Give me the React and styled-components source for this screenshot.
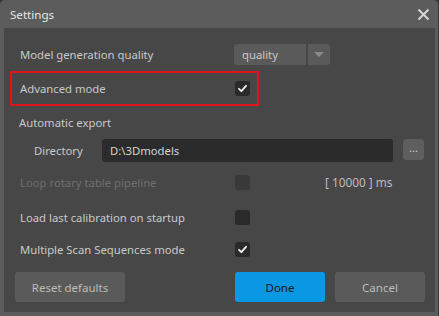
import React from 'react'
import styled, { createGlobalStyle } from 'styled-components'

const GlobalStyle = createGlobalStyle`
  html, body {
    margin: 0;
    padding: 0;
    background: #3a3a3a;
  }
  body {
    font-family: 'Noto Sans', 'Open Sans', sans-serif;
  }
`

const Window = styled.div`
  width: 438px;
  height: 316px;
  background: #5c5c5c;
  border-radius: 5px 5px 0 0;
  display: flex;
  flex-direction: column;
  box-sizing: border-box;
`

const TitleBar = styled.div`
  height: 28px;
  display: flex;
  align-items: center;
  justify-content: space-between;
  padding: 0 8px 0 10px;
  color: #e6e6e6;
  font-size: 11.6px;
`

const CloseButton = styled.div`
  width: 14px;
  height: 14px;
  display: flex;
  align-items: center;
  justify-content: center;
  margin-top: 1px;
`

const Content = styled.div`
  flex: 1;
  margin: 0 3px 4px 4px;
  background: #474747;
  padding: 16px 0 10px 0;
  display: flex;
  flex-direction: column;
  font-size: 11.3px;
  color: #c9c9c9;
`

const Row = styled.div`
  display: flex;
  align-items: center;
  height: ${p => p.h || 20}px;
  margin-top: ${p => p.mt || 0}px;
  padding-left: ${p => p.indent || 16}px;
`

const Label = styled.div`
  width: ${p => p.w || 215}px;
  flex-shrink: 0;
  color: ${p => (p.disabled ? '#6f6f6f' : '#c9c9c9')};
  white-space: nowrap;
`

const Highlight = styled.div`
  margin: 6px 0 0 6px;
  width: 249px;
  height: 35px;
  box-sizing: border-box;
  border: 2px solid #e3121a;
  display: flex;
  align-items: center;
  padding-left: 8px;
`

const Combo = styled.div`
  display: flex;
  gap: 2px;
  height: 21px;
  margin-left: -1px;
`

const ComboField = styled.div`
  width: 64px;
  background: #5a5a5a;
  border-radius: 3px 0 0 3px;
  padding-left: 8px;
  display: flex;
  align-items: center;
  color: #c9c9c9;
`

const ComboArrow = styled.div`
  width: 22px;
  background: #5a5a5a;
  border-radius: 0 3px 3px 0;
  display: flex;
  align-items: center;
  justify-content: center;
`

const Box = styled.div`
  width: 15px;
  height: 15px;
  border-radius: 3px;
  background: ${p => (p.disabled ? '#393939' : '#2a2a2a')};
  display: flex;
  align-items: center;
  justify-content: center;
  flex-shrink: 0;
`

const PathInput = styled.div`
  width: 291px;
  height: 23px;
  box-sizing: border-box;
  background: #2b2b2b;
  border-radius: 3px;
  padding-left: 8px;
  display: flex;
  align-items: center;
  color: #d4d4d4;
`

const BrowseButton = styled.div`
  width: 21px;
  height: 21px;
  margin-left: 10px;
  margin-top: -3px;
  background: #5e5e5e;
  border-radius: 3px;
  color: #d0d0d0;
  display: flex;
  align-items: center;
  justify-content: center;
  font-size: 11px;
  line-height: 1;
  padding-bottom: 3px;
  box-sizing: border-box;
`

const Interval = styled.div`
  margin-left: 75px;
  color: #bdbdbd;
  font-size: 11.8px;
`

const ButtonBar = styled.div`
  display: flex;
  margin-top: 13px;
  padding: 0 10px 0 11px;
  height: 30px;
`

const Button = styled.div`
  width: ${p => p.w || 90}px;
  height: 30px;
  border-radius: 3px;
  background: ${p => (p.primary ? '#0a98e4' : '#5a5a5a')};
  color: ${p => (p.primary ? '#161616' : '#bdbdbd')};
  display: flex;
  align-items: center;
  justify-content: center;
  font-size: 11.5px;
  margin-left: ${p => p.ml || 0}px;
`

const Check = () => (
  <svg width="11" height="11" viewBox="0 0 11 11">
    <path d="M2 5.8 L4.4 8.2 L9 2.8" fill="none" stroke="#f0f0f0" strokeWidth="1.8" strokeLinecap="round" strokeLinejoin="round" />
  </svg>
)

const Checkbox = ({ checked, disabled }) => (
  <Box disabled={disabled}>{checked && <Check />}</Box>
)

export default function App() {
  return (
    <>
      <GlobalStyle />
      <Window>
        <TitleBar>
          <span>Settings</span>
          <CloseButton>
            <svg width="13" height="13" viewBox="0 0 13 13">
              <path d="M1.5 1.5 L11.5 11.5 M11.5 1.5 L1.5 11.5" stroke="#d6d6d6" strokeWidth="2" />
            </svg>
          </CloseButton>
        </TitleBar>
        <Content>
          <Row h={21}>
            <Label>Model generation quality</Label>
            <Combo>
              <ComboField>quality</ComboField>
              <ComboArrow>
                <svg width="10" height="6" viewBox="0 0 10 6">
                  <path d="M0 0 H10 L5 5 Z" fill="#8a8a8a" />
                </svg>
              </ComboArrow>
            </Combo>
          </Row>
          <Highlight>
            <Label w={215}>Advanced mode</Label>
            <Checkbox checked />
          </Highlight>
          <Row mt={6} h={20} indent={15}>
            <Label>Automatic export</Label>
          </Row>
          <Row mt={7} h={23} indent={30}>
            <Label w={68}>Directory</Label>
            <PathInput>D:\3Dmodels</PathInput>
            <BrowseButton>...</BrowseButton>
          </Row>
          <Row mt={10}>
            <Label disabled>Loop rotary table pipeline</Label>
            <Checkbox disabled />
            <Interval>[ 10000 ] ms</Interval>
          </Row>
          <Row mt={15}>
            <Label>Load last calibration on startup</Label>
            <Checkbox />
          </Row>
          <Row mt={12}>
            <Label>Multiple Scan Sequences mode</Label>
            <Checkbox checked />
          </Row>
          <ButtonBar>
            <Button w={110}>Reset defaults</Button>
            <Button primary ml={110}>Done</Button>
            <Button ml={10}>Cancel</Button>
          </ButtonBar>
        </Content>
      </Window>
    </>
  )
}
